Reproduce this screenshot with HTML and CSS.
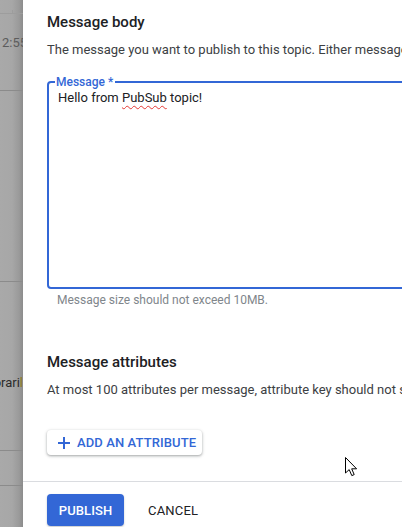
FILE: index.html
```html
<!DOCTYPE html>
<html>
<head>
<meta charset="utf-8">
<link rel="stylesheet" href="styles.css">
</head>
<body>
<div class="page">
  <div class="backdrop">
    <div class="bd-row bd-r0"><span class="tick"></span></div>
    <div class="bd-row bd-r1"><span class="bd-time">2:55</span></div>
    <div class="bd-row bd-r2"></div>
    <div class="bd-row bd-r3"><span class="bd-word">orari<span class="bd-l">l</span></span></div>
    <div class="bd-row bd-r4"></div>
    <div class="bd-row bd-r5"></div>
  </div>
  <div class="panel">
    <div class="content">
      <h2 class="title">Message body</h2>
      <p class="desc">The message you want to publish to this topic. Either message data or at least one attribute must be present.</p>
      <fieldset class="field">
        <legend class="field-label">Message *</legend>
        <div class="field-value">Hello from <span class="misspelled">PubSub</span> topic!</div>
      </fieldset>
      <div class="helper">Message size should not exceed 10MB.</div>

      <h2 class="title title-attrs">Message attributes</h2>
      <p class="desc">At most 100 attributes per message, attribute key should not start with 'goog' and should not exceed 256 bytes.</p>
      <button class="btn-attr">
        <svg class="plus" width="12" height="12" viewBox="0 0 12 12"><path d="M6 0v12M0 6h12" stroke="#3367d6" stroke-width="2" fill="none"/></svg>
        <span>ADD AN ATTRIBUTE</span>
      </button>
    </div>
    <div class="footer">
      <button class="btn-primary">PUBLISH</button>
      <button class="btn-text">CANCEL</button>
    </div>
    <svg class="cursor" width="13" height="20" viewBox="0 0 13 20"><path d="M0.5 0.5 L0.5 16 L4.2 12.6 L6.8 18.6 L9.2 17.6 L6.7 11.8 L11.6 11.8 Z" fill="#fff" stroke="#000" stroke-width="1" stroke-linejoin="miter"/></svg>
  </div>
</div>
</body>
</html>
```

FILE: styles.css
```css
html, body {
  margin: 0;
  padding: 0;
}
body {
  width: 402px;
  height: 527px;
  overflow: hidden;
  font-family: Roboto, "Noto Sans", Arial, sans-serif;
  background: #fff;
}
.page {
  display: flex;
  height: 527px;
  width: 402px;
  overflow: hidden;
}
.backdrop {
  width: 23px;
  flex: 0 0 23px;
  display: flex;
  flex-direction: column;
  background: linear-gradient(to right, #a9a9a9 0, #a7a7a7 12px, #9a9a9a 19px, #8c8c8c 23px);
  overflow: hidden;
}
.bd-row {
  border-bottom: 1px solid #8b8b8b;
  position: relative;
  overflow: hidden;
}
.bd-r0 { height: 13px; border-bottom-color: #9d9d9d; }
.tick {
  position: absolute;
  left: 12px;
  bottom: -1px;
  width: 1px;
  height: 4px;
  background: #9d9d9d;
}
.bd-r1 { height: 76px; }
.bd-r2 { height: 190px; }
.bd-r3 { height: 168px; }
.bd-r4 { height: 34px; }
.bd-r5 { flex: 1; border-bottom: 0; }
.bd-time {
  display: block;
  margin-top: 21px;
  padding-left: 2px;
  font-size: 13px;
  line-height: 16px;
  color: #5c5c5c;
  white-space: nowrap;
}
.bd-word {
  display: block;
  margin-top: 93px;
  font-size: 13px;
  line-height: 16px;
  color: #2a2a2a;
  white-space: nowrap;
  text-align: right;
  direction: rtl;
  width: 23px;
}
.bd-l { color: #8c7a1c; }

.panel {
  position: relative;
  flex: 0 0 600px;
  width: 600px;
  background: #fff;
  display: flex;
  flex-direction: column;
}
.content {
  padding: 10px 0 0 24px;
  flex: 1;
}
.title {
  margin: 0;
  font-size: 15px;
  line-height: 24px;
  font-weight: 500;
  color: #202124;
}
.desc {
  margin: 6px 0 0;
  font-size: 13px;
  line-height: 20px;
  color: #3c4043;
  white-space: nowrap;
}
.field {
  margin: 14px 0 0;
  padding: 0 9px;
  width: 520px;
  height: 215px;
  box-sizing: border-box;
  border: 2px solid #3367d6;
  border-radius: 4px;
}
.field-label {
  margin-left: -3px;
  padding: 0 2px 0 1px;
  font-size: 12px;
  line-height: 16px;
  font-weight: 500;
  color: #3367d6;
}
.field-value {
  margin-top: -2px;
  font-size: 13px;
  line-height: 20px;
  color: #202124;
}
.misspelled {
  text-decoration: underline wavy #e53935;
  text-decoration-thickness: 1px;
  text-underline-offset: 3px;
}
.helper {
  margin-top: 3px;
  padding-left: 10px;
  font-size: 12px;
  line-height: 16px;
  color: #80868b;
}
.title-attrs {
  margin-top: 42px;
}
.btn-attr {
  margin-top: 30px;
  display: flex;
  align-items: center;
  gap: 7px;
  height: 25px;
  width: 155px;
  padding: 0 0 0 11px;
  border: 0;
  border-radius: 4px;
  background: #fff;
  box-shadow: 0 1px 2px rgba(60,64,67,0.3), 0 1px 3px 1px rgba(60,64,67,0.15);
  font-family: inherit;
  font-size: 13px;
  font-weight: 500;
  color: #3367d6;
  letter-spacing: 0.1px;
  cursor: pointer;
}
.plus { flex: 0 0 12px; }
.footer {
  border-top: 1px solid #dadce0;
  margin-top: 26px;
  padding: 12px 0 3px 24px;
  display: flex;
  align-items: center;
  gap: 24px;
  height: 32px;
}
.btn-primary {
  height: 32px;
  width: 77px;
  border: 0;
  border-radius: 4px;
  background: #3367d6;
  color: #fff;
  font-family: inherit;
  font-size: 13px;
  font-weight: 500;
  letter-spacing: 0.1px;
  box-shadow: 0 1px 2px rgba(60,64,67,0.3);
  padding: 0;
}
.btn-text {
  border: 0;
  background: transparent;
  color: #202124;
  font-family: inherit;
  font-size: 13px;
  font-weight: 400;
  letter-spacing: 0.2px;
  padding: 0;
}
.cursor {
  position: absolute;
  left: 322px;
  top: 457px;
}
```
